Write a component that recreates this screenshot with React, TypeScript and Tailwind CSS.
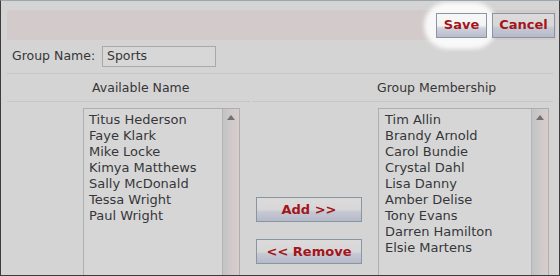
const available = ['Titus Hederson', 'Faye Klark', 'Mike Locke', 'Kimya Matthews', 'Sally McDonald', 'Tessa Wright', 'Paul Wright'];
const members = ['Tim Allin', 'Brandy Arnold', 'Carol Bundie', 'Crystal Dahl', 'Lisa Danny', 'Amber Delise', 'Tony Evans', 'Darren Hamilton', 'Elsie Martens'];

const btn =
  'h-[25px] border border-[#8797a1] bg-[linear-gradient(to_bottom,#dcdada_0%,#d8d7d8_50%,#c6c8d3_60%,#b6b9c9_100%)] text-[13px] font-bold text-[#a3151b]';

const ListBox = ({ items, width, pad }: { items: string[]; width: string; pad: string }) => (
  <div className={`flex h-[180px] border border-[#acafb1] bg-[#d6d6d6] ${width}`}>
    <ul className={`flex-1 pt-[3px] text-[13px] leading-[16px] text-[#36363a] ${pad}`}>
      {items.map((n) => (
        <li key={n}>{n}</li>
      ))}
    </ul>
    <div className="flex w-[17px] justify-center border-l border-[#b3b6b9] bg-[linear-gradient(to_right,#c1c3c5,#cfc9ca,#dacccc)] pt-[6px]">
      <div className="h-0 w-0 border-b-[5px] border-l-[4px] border-r-[4px] border-b-[#707070] border-l-transparent border-r-transparent" />
    </div>
  </div>
);

const App = () => {
  return (
    <div className="relative h-[276px] w-[560px] overflow-hidden border border-[#3c3c3c] border-t-[#9aa7ab] bg-[#d4d4d4] pl-[6px] pt-[9px] font-['DejaVu_Sans',Verdana,sans-serif] text-[#363636]">
      {/* highlight around Save */}
      <div className="absolute left-[423px] top-[1px] h-[47px] w-[73px] rounded-full bg-white/85 blur-[2px]" />

      {/* toolbar */}
      <div className="flex h-[30px] w-[549px] items-center justify-end gap-[5px] bg-[#d3cbcb] pr-[1px]">
        <button className={`relative z-10 w-[51px] ${btn} bg-[linear-gradient(to_bottom,#f8f8f8_0%,#f3f3f3_50%,#cfd1dc_62%,#b9bccb_100%)]`}>Save</button>
        <button className={`relative z-10 w-[63px] ${btn}`}>Cancel</button>
      </div>

      <div className="w-[546px]">
        {/* group name */}
        <div className="flex h-[34px] items-center border-b border-[#c6c6c6] pl-[5px] text-[12.5px]">
          <div className="w-[90px]">Group Name:</div>
          <div className="flex h-[21px] w-[114px] items-center border border-[#a9a9a9] bg-[#d7d7d7] pl-[4px]">Sports</div>
        </div>

        {/* headers */}
        <div className="flex gap-[2px] text-[12.5px]">
          <div className="h-[28px] w-[243px] border-b border-[#c6c6c6] pl-[85px] pt-[5px]">Available Name</div>
          <div className="h-[28px] flex-1 border-b border-[#c6c6c6] pl-[125px] pt-[5px]">Group Membership</div>
        </div>

        {/* lists */}
        <div className="mt-[6px] flex">
          <div className="ml-[76px]">
            <ListBox items={available} width="w-[157px]" pad="pl-[5px]" />
          </div>
          <div className="ml-[16px] flex w-[106px] flex-col pt-[89px]">
            <button className={`w-[106px] ${btn}`}>Add &gt;&gt;</button>
            <button className={`mt-[17px] w-[106px] ${btn}`}>&lt;&lt; Remove</button>
          </div>
          <div className="ml-[16px]">
            <ListBox items={members} width="w-[171px]" pad="pl-[6px]" />
          </div>
        </div>
      </div>
    </div>
  );
};

export default App;
